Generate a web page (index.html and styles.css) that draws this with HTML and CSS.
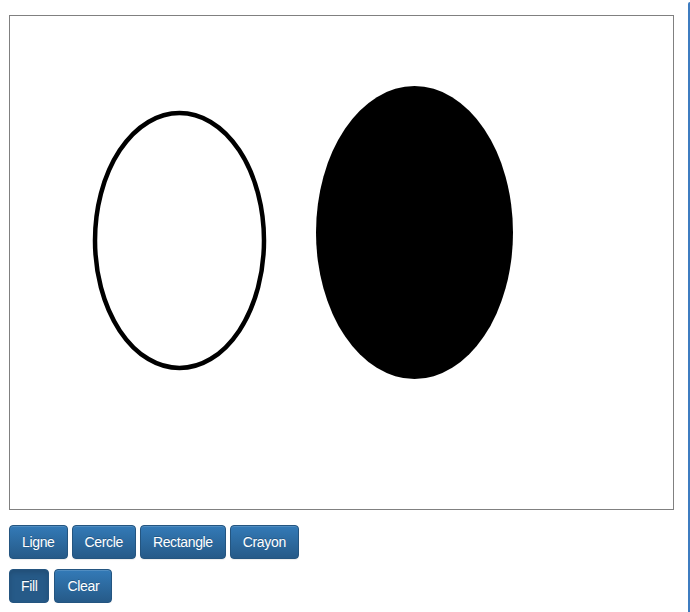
FILE: index.html
```html
<!DOCTYPE html>
<html>
<head>
<meta charset="utf-8">
<link rel="stylesheet" href="styles.css">
</head>
<body>
<div class="page">
  <div class="board">
    <svg class="drawing" width="663" height="493" viewBox="0 0 663 493">
      <ellipse cx="169.5" cy="224.5" rx="84.5" ry="127.5" fill="none" stroke="#000" stroke-width="4.5"/>
      <ellipse cx="404.5" cy="216.5" rx="98.5" ry="146.5" fill="#000"/>
    </svg>
  </div>
  <div class="toolbar">
    <button class="btn">Ligne</button>
    <button class="btn">Cercle</button>
    <button class="btn">Rectangle</button>
    <button class="btn">Crayon</button>
  </div>
  <div class="toolbar">
    <button class="btn active">Fill</button>
    <button class="btn">Clear</button>
  </div>
</div>
<div class="edge"></div>
</body>
</html>
```
FILE: styles.css
```css
html, body {
  margin: 0;
  padding: 0;
  background: #fff;
  font-family: "Liberation Sans", Arial, sans-serif;
}
.page {
  display: flex;
  flex-direction: column;
  align-items: flex-start;
  padding: 15px 0 0 9px;
}
.board {
  border: 1px solid #808080;
  width: 663px;
  height: 493px;
  background: #fff;
}
.drawing {
  display: block;
}
.toolbar {
  display: flex;
  gap: 4px;
}
.toolbar + .toolbar {
  margin-top: 10px;
  gap: 5px;
}
.board + .toolbar {
  margin-top: 15px;
}
.btn {
  font-family: "Liberation Sans", Arial, sans-serif;
  font-size: 14px;
  letter-spacing: -0.35px;
  line-height: 20px;
  padding: 6px 12px;
  height: 34px;
  color: #fff;
  border: 1px solid #245580;
  border-radius: 4px;
  background-color: #2e6da4;
  background-image: linear-gradient(to bottom, #337ab7 0, #265a88 100%);
  text-shadow: 0 -1px 0 rgba(0,0,0,.2);
  box-shadow: inset 0 1px 0 rgba(255,255,255,.15), 0 1px 1px rgba(0,0,0,.075);
  cursor: pointer;
}
.btn.active {
  background-color: #265a88;
  background-image: none;
  border-color: #245580;
  box-shadow: inset 0 3px 5px rgba(0,0,0,.125);
  padding: 6px 11px;
}
.edge {
  position: absolute;
  top: 2px;
  right: 0;
  bottom: 0;
  width: 2px;
  background: #3d7cc0;
  border-top-left-radius: 2px;
}
```
